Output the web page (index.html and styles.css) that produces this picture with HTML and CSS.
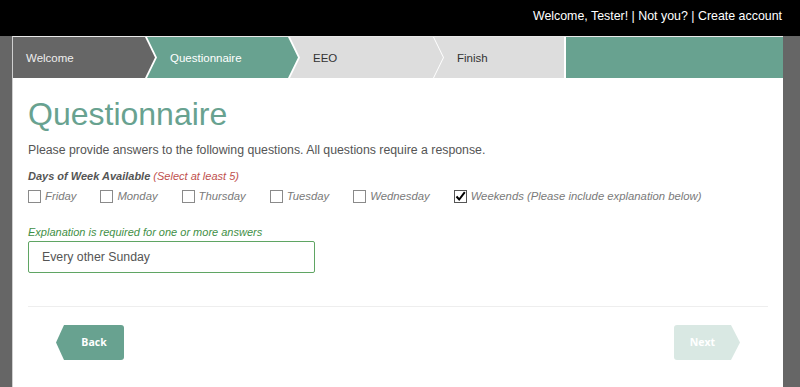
FILE: index.html
```html
<!DOCTYPE html>
<html lang="en">
<head>
    <meta charset="UTF-8">
    <meta name="viewport" content="width=device-width, initial-scale=1.0">
    <title>Questionnaire</title>
    <link rel="stylesheet" href="styles.css">
</head>
<body>
    <div class="topbar">
        Welcome, Tester! | Not you? | Create account
    </div>

    <div class="card">
        <div class="steps">
            <div class="step done">Welcome</div>
            <div class="step active">Questionnaire</div>
            <div class="step">EEO</div>
            <div class="step last">Finish</div>
            <div class="step-fill"></div>
        </div>

        <div class="content">
            <h1>Questionnaire</h1>
            <p class="intro">Please provide answers to the following questions. All questions require a response.</p>

            <div class="question">Days of Week Available <span class="hint">(Select at least 5)</span></div>
            <div class="choices">
                <label class="choice"><span class="box"></span>Friday</label>
                <label class="choice"><span class="box"></span>Monday</label>
                <label class="choice"><span class="box"></span>Thursday</label>
                <label class="choice"><span class="box"></span>Tuesday</label>
                <label class="choice"><span class="box"></span>Wednesday</label>
                <label class="choice"><span class="box checked"><svg width="11" height="11" viewBox="0 0 11 11"><path d="M1.5 5.5 L4.2 8.5 L9.8 1.2" fill="none" stroke="#000" stroke-width="2"/></svg></span>Weekends (Please include explanation below)</label>
            </div>

            <div class="explain">Explanation is required for one or more answers</div>
            <div class="field">Every other Sunday</div>

            <div class="divider"></div>

            <div class="buttons">
                <div class="btn back">Back</div>
                <div class="btn next">Next</div>
            </div>
        </div>
    </div>
</body>
</html>
```

FILE: styles.css
```css
body {
    margin: 0;
    background-color: #666666;
    font-family: "Liberation Sans", Arial, sans-serif;
    color: #555555;
}

.topbar {
    height: 36px;
    box-sizing: border-box;
    background-color: #000000;
    color: #ffffff;
    font-size: 12.4px;
    line-height: 20px;
    padding: 6px 18px 0 0;
    text-align: right;
}

.card {
    margin: 0 17px 0 12px;
    min-height: 351px;
    box-sizing: border-box;
    background-color: #ffffff;
    border-left: 1px solid #cfcfcf;
    border-top: 1px solid #e8e8e8;
}

.steps {
    display: flex;
    height: 41px;
    background-color: #ffffff;
}

.step {
    display: flex;
    align-items: center;
    width: 153px;
    margin-left: -8px;
    padding-left: 23px;
    box-sizing: border-box;
    background-color: #dddddd;
    color: #333333;
    font-size: 11.5px;
    clip-path: polygon(0 0, calc(100% - 10px) 0, 100% 50%, calc(100% - 10px) 100%, 0 100%, 10px 50%);
}

.step.done {
    width: 142px;
    margin-left: 0;
    padding-left: 13px;
    background-color: #666666;
    color: #eeeeee;
    clip-path: polygon(0 0, calc(100% - 10px) 0, 100% 50%, calc(100% - 10px) 100%, 0 100%);
}

.step.active {
    width: 151px;
    background-color: #68a290;
    color: #ffffff;
}

.step.last {
    width: 130px;
    margin-left: -9px;
    clip-path: polygon(0 0, 100% 0, 100% 100%, 0 100%, 10px 50%);
}

.step-fill {
    flex: 1;
    margin-left: 2px;
    background-color: #68a290;
}

.content {
    padding: 0 15px;
}

h1 {
    margin: 17px 0 0;
    font-size: 32px;
    line-height: 38px;
    font-weight: normal;
    color: #68a290;
}

.intro {
    margin: 9px 0 0;
    font-size: 12.3px;
    line-height: 16px;
}

.question {
    margin-top: 11px;
    font-size: 11px;
    line-height: 14px;
    font-weight: bold;
    font-style: italic;
}

.hint {
    font-weight: normal;
    color: #c0504d;
}

.choices {
    display: flex;
    gap: 24px;
    margin-top: 6px;
    height: 14px;
}

.choice {
    display: flex;
    align-items: center;
    gap: 4px;
    font-size: 11.3px;
    font-style: italic;
    color: #7a7a7a;
}

.box {
    display: flex;
    align-items: center;
    justify-content: center;
    width: 13px;
    height: 13px;
    box-sizing: border-box;
    border: 1px solid #8a8a8a;
    background-color: #ffffff;
}

.box.checked {
    border-color: #555555;
}

.explain {
    margin-top: 22px;
    font-size: 11px;
    line-height: 14px;
    font-style: italic;
    color: #3f8f46;
}

.field {
    margin-top: 2px;
    width: 287px;
    height: 32px;
    box-sizing: border-box;
    border: 1px solid #5fa563;
    border-radius: 2px;
    padding-left: 13px;
    font-size: 12.3px;
    line-height: 30px;
    color: #555555;
}

.divider {
    margin-top: 33px;
    height: 1px;
    background-color: #eeeeee;
}

.buttons {
    display: flex;
    justify-content: space-between;
    margin-top: 18px;
    padding: 0 28px;
}

.btn {
    height: 35px;
    line-height: 35px;
    font-family: "Open Sans", sans-serif;
    font-size: 10.5px;
    font-weight: bold;
    color: #ffffff;
    box-sizing: border-box;
}

.btn.back {
    width: 68px;
    padding-left: 8px;
    text-align: center;
    background-color: #68a290;
    clip-path: polygon(8px 0, 100% 0, 100% 100%, 8px 100%, 0 50%);
    border-radius: 0 3px 3px 0;
}

.btn.next {
    width: 66px;
    padding-right: 9px;
    text-align: center;
    background-color: #d9e8e3;
    clip-path: polygon(0 0, calc(100% - 9px) 0, 100% 50%, calc(100% - 9px) 100%, 0 100%);
    border-radius: 3px 0 0 3px;
}
```
